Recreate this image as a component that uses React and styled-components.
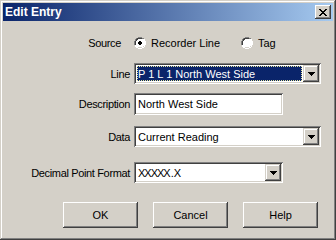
import styled, { createGlobalStyle } from "styled-components";

const Global = createGlobalStyle`
  html, body { margin: 0; padding: 0; background: #d4d0c8; }
  body { font-family: "Liberation Sans", Arial, sans-serif; font-size: 11px; }
`

const Window = styled.div`
  width: 336px;
  height: 240px;
  box-sizing: border-box;
  padding: 3px;
  background: #d4d0c8;
  box-shadow: inset -1px -1px #404040, inset 1px 1px #d4d0c8,
    inset -2px -2px #808080, inset 2px 2px #ffffff;
  display: flex;
  flex-direction: column;
`

const TitleBar = styled.div`
  height: 18px;
  display: flex;
  align-items: center;
  justify-content: space-between;
  padding: 0 2px 0 2px;
  background: linear-gradient(to right, #0a246a, #a6caf0);
`

const Title = styled.span`
  color: #fff;
  font-weight: bold;
  font-size: 12px;
`

const CloseBtn = styled.div`
  width: 16px;
  height: 14px;
  box-sizing: border-box;
  background: #d4d0c8;
  box-shadow: inset -1px -1px #404040, inset 1px 1px #ffffff,
    inset -2px -2px #808080;
  display: flex;
  align-items: center;
  justify-content: center;
`

const Body = styled.div`
  display: flex;
  flex-direction: column;
  padding-top: 15px;
`

const Row = styled.div`
  display: grid;
  grid-template-columns: 127px auto;
  column-gap: 4px;
  align-items: center;
  margin-top: ${p => p.$mt || 0}px;
  height: ${p => p.$h}px;
`

const Label = styled.div`
  text-align: right;
  padding-right: ${p => p.$pr || 0}px;
  letter-spacing: -0.35px;
  color: #000;
`

const Radios = styled.div`
  display: flex;
  align-items: center;
`

const RadioItem = styled.div`
  display: flex;
  align-items: center;
  gap: 5px;
  width: ${p => p.$w ? p.$w + "px" : "auto"};
`

const Sunken = styled.div`
  box-sizing: border-box;
  width: ${p => p.$w}px;
  height: ${p => p.$h}px;
  padding: 2px;
  background: #fff;
  box-shadow: inset 1px 1px #808080, inset -1px -1px #ffffff,
    inset 2px 2px #404040, inset -2px -2px #d4d0c8;
  display: flex;
  align-items: stretch;
`

const Value = styled.div`
  flex: 1;
  display: flex;
  align-items: center;
  padding-left: 2px;
  white-space: nowrap;
  overflow: hidden;
`

const Tight = styled.span`
  letter-spacing: -1px;
  margin-right: 1px;
`

const Selected = styled.div`
  flex: 1;
  margin: 1px;
  display: flex;
  align-items: center;
  padding-left: 1px;
  background: #0a246a;
  color: #fff;
  outline: 1px dotted #e6e69c;
  outline-offset: -1px;
  white-space: nowrap;
`

const DropBtn = styled.div`
  width: 16px;
  box-sizing: border-box;
  background: #d4d0c8;
  box-shadow: inset -1px -1px #404040, inset 1px 1px #d4d0c8,
    inset -2px -2px #808080, inset 2px 2px #ffffff;
  display: flex;
  align-items: center;
  justify-content: center;
`

const Buttons = styled.div`
  display: flex;
  gap: 15px;
  padding-left: 60px;
  margin-top: 19px;
`

const Button = styled.div`
  width: 75px;
  height: 26px;
  box-sizing: border-box;
  display: flex;
  align-items: center;
  justify-content: center;
  background: #d4d0c8;
  box-shadow: inset -1px -1px #404040, inset 1px 1px #ffffff,
    inset -2px -2px #808080, inset 2px 2px #d4d0c8;
`

const Radio = ({ checked }) => (
  <svg width="12" height="12" viewBox="0 0 12 12">
    <path d="M4 0h4v1h2v1h1v2h1v4h-1v2h-1v1h-2v1h-4v-1h-2v-1h-1v-2h-1v-4h1v-2h1v-1h2z" fill="#ffffff" />
    <path d="M4 0h4v1h2v1h-2v-1h-4v1h-2v2h-1v4h-1v-4h1v-2h1v-1h2z" fill="#808080" />
    <path d="M4 1h4v1h-4v1h-1v1h-1v4h-1v-4h1v-2h1v-1z" fill="#404040" />
    <path d="M10 2h1v2h1v4h-1v2h-1v1h-2v1h-4v-1h4v-1h2v-2h1v-4h-1z" fill="#ffffff" />
    <path d="M10 3v1h0v4h0v1h-1v1h-1v0h-4v1h4v-1h2v-2h0v-4z" fill="#d4d0c8" />
    {checked && <path d="M5 4h2v1h1v2h-1v1h-2v-1h-1v-2h1z" fill="#000" />}
  </svg>
)

const Arrow = () => (
  <svg width="7" height="4" viewBox="0 0 7 4">
    <path d="M0 0h7v1h-1v1h-1v1h-1v1h-1v-1h-1v-1h-1v-1h-1z" fill="#000" />
  </svg>
)

const Combo = ({ w, children, selected }) => (
  <Sunken $w={w} $h={21}>
    {selected ? <Selected>{children}</Selected> : <Value>{children}</Value>}
    <DropBtn><Arrow /></DropBtn>
  </Sunken>
)

export default function App() {
  return (
    <>
      <Global />
      <Window>
        <TitleBar>
          <Title>Edit Entry</Title>
          <CloseBtn>
            <svg width="8" height="7" viewBox="0 0 8 7">
              <path d="M0 0h2v1h1v1h2v-1h1v-1h2v1h-1v1h-1v1h-1v1h1v1h1v1h1v1h-2v-1h-1v-1h-2v1h-1v1h-2v-1h1v-1h1v-1h1v-1h-1v-1h-1v-1h-1z" fill="#000" />
            </svg>
          </CloseBtn>
        </TitleBar>
        <Body>
          <Row $h={14}>
            <Label $pr={9}>Source</Label>
            <Radios>
              <RadioItem $w={107}><Radio checked />Recorder Line</RadioItem>
              <RadioItem><Radio />Tag</RadioItem>
            </Radios>
          </Row>
          <Row $h={21} $mt={13}>
            <Label>Line</Label>
            <Combo w={187} selected>P 1 L 1 North West Side</Combo>
          </Row>
          <Row $h={22} $mt={9}>
            <Label>Description</Label>
            <Sunken $w={149} $h={22}><Value>North West Side</Value></Sunken>
          </Row>
          <Row $h={21} $mt={11}>
            <Label>Data</Label>
            <Combo w={187}>Current Reading</Combo>
          </Row>
          <Row $h={21} $mt={15}>
            <Label>Decimal Point Format</Label>
            <Combo w={149}><Tight>XXXXX</Tight>.X</Combo>
          </Row>
          <Buttons>
            <Button>OK</Button>
            <Button>Cancel</Button>
            <Button>Help</Button>
          </Buttons>
        </Body>
      </Window>
    </>
  )
}
